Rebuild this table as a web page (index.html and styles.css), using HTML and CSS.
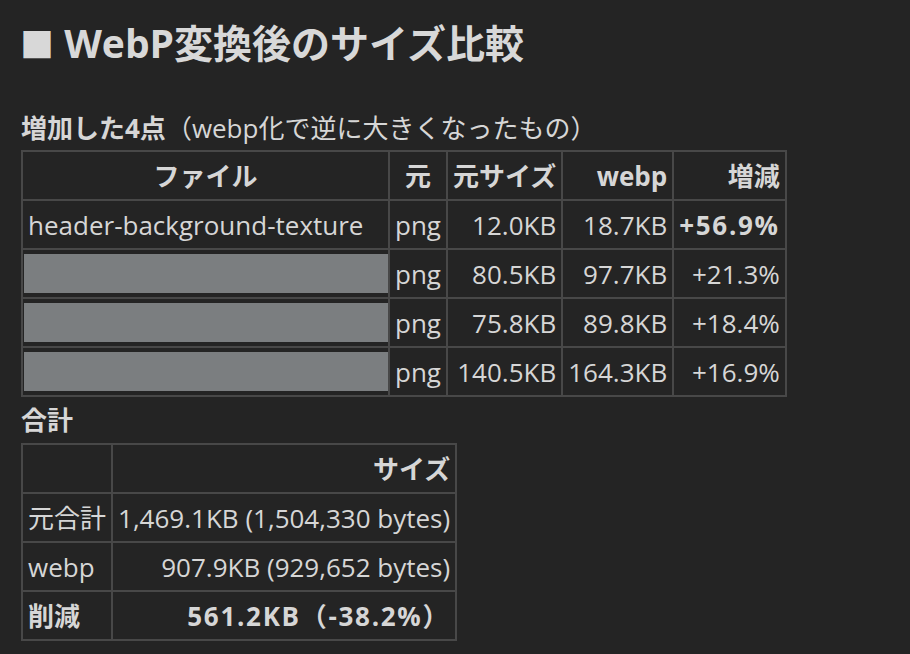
FILE: index.html
```html
<!DOCTYPE html>
<html lang="ja">
<head>
<meta charset="utf-8">
<title>WebP変換後のサイズ比較</title>
<link rel="stylesheet" href="styles.css">
</head>
<body>
<main class="doc">
  <h1 class="title"><span class="mark">■</span> WebP変換後のサイズ比較</h1>
  <p class="caption"><strong>増加した4点</strong>（webp化で逆に大きくなったもの）</p>
  <table class="grid">
    <thead>
      <tr>
        <th>ファイル</th>
        <th>元</th>
        <th class="r">元サイズ</th>
        <th class="r">webp</th>
        <th class="r">増減</th>
      </tr>
    </thead>
    <tbody>
      <tr>
        <td>header-background-texture</td>
        <td>png</td>
        <td class="r">12.0KB</td>
        <td class="r">18.7KB</td>
        <td class="r"><strong class="num">+56.9%</strong></td>
      </tr>
      <tr>
        <td class="redacted-cell"><div class="redacted"></div></td>
        <td>png</td>
        <td class="r">80.5KB</td>
        <td class="r">97.7KB</td>
        <td class="r">+21.3%</td>
      </tr>
      <tr>
        <td class="redacted-cell"><div class="redacted"></div></td>
        <td>png</td>
        <td class="r">75.8KB</td>
        <td class="r">89.8KB</td>
        <td class="r">+18.4%</td>
      </tr>
      <tr>
        <td class="redacted-cell"><div class="redacted"></div></td>
        <td>png</td>
        <td class="r">140.5KB</td>
        <td class="r">164.3KB</td>
        <td class="r">+16.9%</td>
      </tr>
    </tbody>
  </table>
  <p class="caption total"><strong>合計</strong></p>
  <table class="grid">
    <thead>
      <tr>
        <th></th>
        <th class="r">サイズ</th>
      </tr>
    </thead>
    <tbody>
      <tr>
        <td>元合計</td>
        <td class="r">1,469.1KB (1,504,330 bytes)</td>
      </tr>
      <tr>
        <td>webp</td>
        <td class="r">907.9KB (929,652 bytes)</td>
      </tr>
      <tr>
        <td><strong>削減</strong></td>
        <td class="r"><strong class="num">561.2KB（-38.2%）</strong></td>
      </tr>
    </tbody>
  </table>
</main>
</body>
</html>
```

FILE: styles.css
```css
html, body {
  margin: 0;
  padding: 0;
  background: #242424;
}

body {
  color: #d6d6d6;
  font-family: "Open Sans", "Noto Sans CJK JP", sans-serif;
  font-size: 26px;
}

.doc {
  padding: 16px 21px 0 21px;
}

.title {
  margin: 0;
  font-size: 39px;
  font-weight: 700;
  line-height: 53px;
  color: #d8d8d8;
}

.title .mark {
  font-size: 34px;
  line-height: 0;
  margin-left: -1px;
}

.caption {
  margin: 41px 0 4px 0;
  line-height: 36px;
}

.caption strong {
  font-weight: 700;
}

.caption.total {
  margin: 5px 0 5px 0;
}

.grid {
  border-collapse: collapse;
  border: 2px solid #484848;
}

.grid th,
.grid td {
  border: 2px solid #484848;
  padding: 0 5px;
  height: 47px;
  line-height: 30px;
  white-space: nowrap;
  vertical-align: middle;
}

.grid th {
  font-weight: 700;
  text-align: center;
}

.grid td {
  text-align: left;
}

.grid .r {
  text-align: right;
}

.grid .num {
  letter-spacing: 1.7px;
}

.grid td.redacted-cell {
  padding: 0 0 0 1px;
}

.redacted {
  width: 364px;
  height: 39px;
  background: #7b7e80;
}
```
